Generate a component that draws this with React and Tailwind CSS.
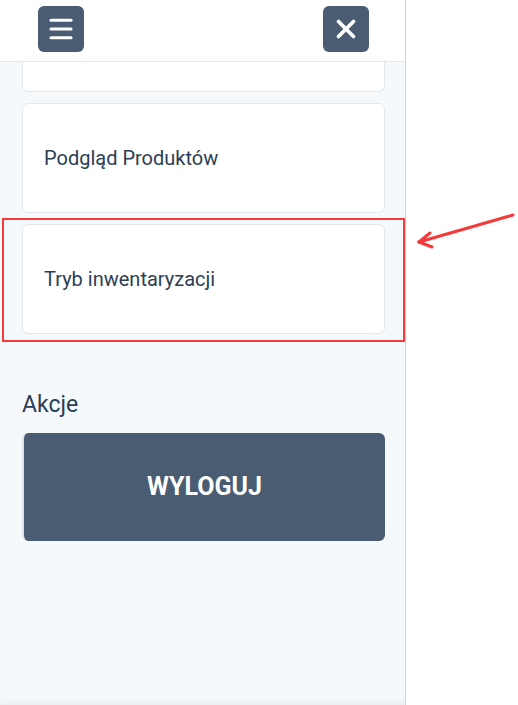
import { Menu, X } from "lucide-react";

const FONT = { fontFamily: "Roboto, 'Noto Sans', sans-serif" };

function NavCard({ label }) {
  return (
    <div className="h-[110px] rounded-md border border-[#e3e8ef] bg-white flex items-center pl-[21px] text-[20px] text-[#2c3e54]">
      {label}
    </div>
  );
}

export default function App() {
  return (
    <div className="relative w-[518px] h-[705px] flex bg-white overflow-hidden" style={FONT}>
      {/* Drawer panel */}
      <div className="w-[406px] h-full flex flex-col border-r border-[#cfd3d8] bg-[#f5f9fc] shadow-[inset_0_-8px_8px_-6px_rgba(0,0,0,0.06)]">
        {/* Header */}
        <div className="h-[62px] shrink-0 bg-white border-b border-[#e3e8ef] flex justify-between items-start pt-[6px] pl-[38px] pr-[36px]">
          <button className="w-[46px] h-[46px] rounded-md bg-[#4a5c72] flex items-center justify-center text-white">
            <Menu size={30} strokeWidth={2.5} />
          </button>
          <button className="w-[46px] h-[46px] rounded-md bg-[#4a5c72] flex items-center justify-center text-white">
            <X size={30} strokeWidth={3} />
          </button>
        </div>

        {/* Scrolled list */}
        <div className="flex flex-col gap-[11px] pl-[22px] pr-[20px]">
          <div className="h-[30px] rounded-b-md border border-t-0 border-[#e3e8ef] bg-white" />
          <NavCard label="Podgląd Produktów" />
          <NavCard label="Tryb inwentaryzacji" />
        </div>

        <div className="pl-[22px] pr-[20px] pt-[57px]">
          <h2 className="text-[23px] text-[#2c3e54] leading-[28px]">Akcje</h2>
          <button className="mt-[14px] w-full h-[108px] rounded-md bg-[#4a5c72] border-l-2 border-[#dde3ea] text-white text-[25px] font-bold">
            WYLOGUJ
          </button>
        </div>
      </div>

      {/* Annotation */}
      <div className="absolute left-[2px] top-[218px] w-[403px] h-[124px] border-2 border-[#f43a3a] pointer-events-none" />
      <svg className="absolute left-[410px] top-[205px]" width="108" height="50" viewBox="0 0 108 50">
        <g stroke="#f43a3a" strokeWidth="3" strokeLinecap="round" fill="none">
          <line x1="103" y1="10" x2="9" y2="37" />
          <line x1="9" y1="37" x2="20" y2="28" />
          <line x1="9" y1="37" x2="22" y2="42" />
        </g>
      </svg>
    </div>
  );
}
